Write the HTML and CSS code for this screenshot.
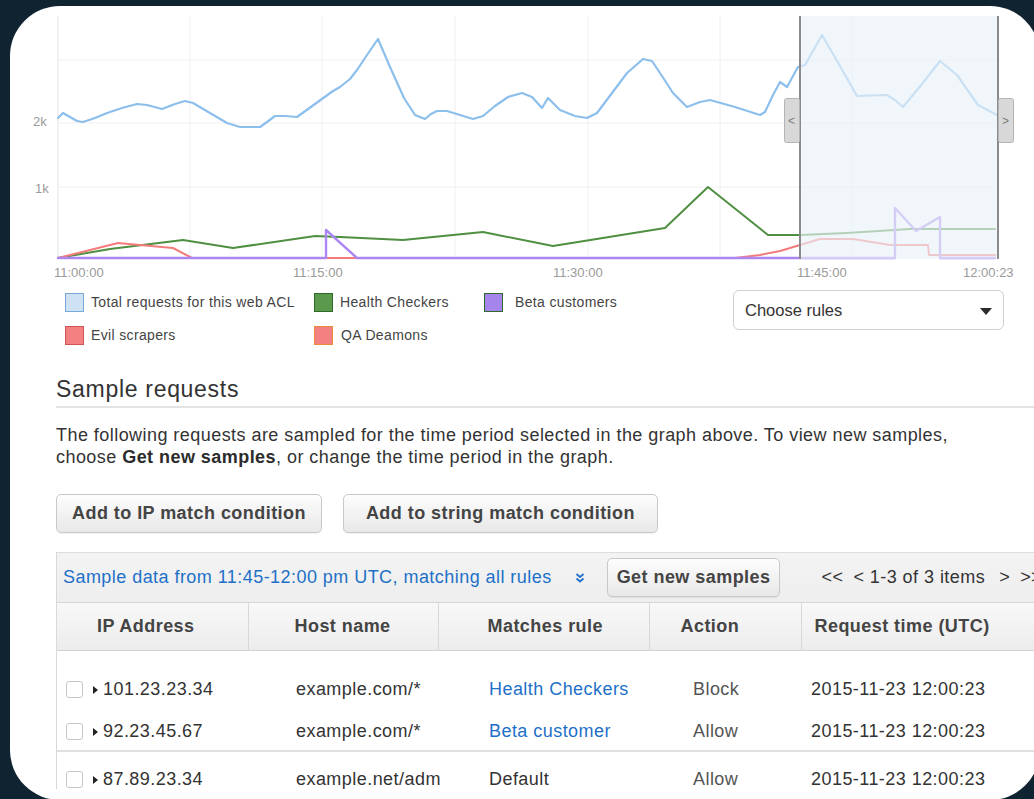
FILE: index.html
```html
<!DOCTYPE html>
<html lang="en">
<head>
<meta charset="utf-8">
<title>Web ACL – Sample requests</title>
<link rel="stylesheet" href="styles.css">
</head>
<body>
<div class="card">
  <svg class="chart" width="1030" height="280" viewBox="10 6 1030 280" xmlns="http://www.w3.org/2000/svg">
    <!-- grid -->
    <g class="grid-h">
      <line x1="58" y1="60" x2="998" y2="60"/>
      <line x1="58" y1="123" x2="998" y2="123"/>
      <line x1="58" y1="187" x2="998" y2="187"/>
    </g>
    <g class="grid-v">
      <line x1="190" y1="16" x2="190" y2="258"/>
      <line x1="322" y1="16" x2="322" y2="258"/>
      <line x1="455" y1="16" x2="455" y2="258"/>
      <line x1="588" y1="16" x2="588" y2="258"/>
      <line x1="720" y1="16" x2="720" y2="258"/>
      <line x1="852" y1="16" x2="852" y2="258"/>
    </g>
    <line class="axis" x1="58" y1="16" x2="58" y2="259"/>

    <text class="tick" x="33" y="126">2k</text>
    <text class="tick" x="35" y="193">1k</text>

    <!-- series -->
    <polyline class="s-total" points="58,118 63,113 70,117 77,121 83,122 95,118 107,113 122,108 137,104 147,105 162,109 175,104 185,101 193,103 210,113 227,123 240,127 260,127 267,122 275,116 285,116 297,117 315,104 333,91 340,87 350,79 357,70 367,55 378,39 390,67 404,98 415,115 425,119 431,114 437,111 447,111 460,115 473,119 483,116 495,106 508,97 522,93 532,97 542,108 548,98 560,110 575,116 587,118 597,113 612,93 627,73 643,59 652,61 662,76 673,93 687,107 700,102 710,100 735,107 760,115 765,112 773,95 780,82 787,87 793,76 798,67 805,65 822,35 840,66 857,96 887,95 895,100 903,107 922,84 940,61 957,75 978,105 997,115"/>
    <polyline class="s-health" points="58,258 110,249 183,240 233,248 315,236 340,237 403,240 483,232 553,246 665,228 708,187 768,235 800,235 847,233 910,229 995,229"/>
    <polyline class="s-evil" points="58,258 118,243 173,248 192,258 735,258 760,255 780,251 800,245 820,239 853,239 890,245 928,245 929,255 995,255"/>
    <polyline class="s-beta" points="58,258 326,258 326,230 357,258 895,258 895,208 916,231 940,217 940,258 995,258"/>

    <!-- selected time range -->
    <rect class="range" x="800" y="16" width="198" height="243"/>
    <line class="range-edge" x1="800" y1="16" x2="800" y2="259"/>
    <line class="range-edge" x1="998" y1="16" x2="998" y2="259"/>
    <rect class="handle" x="784.5" y="98.5" width="15" height="44" rx="2"/>
    <text class="handle-glyph" x="788" y="125">&lt;</text>
    <rect class="handle" x="998.5" y="98.5" width="15" height="44" rx="2"/>
    <text class="handle-glyph" x="1002" y="125">&gt;</text>

    <text class="tick" x="54" y="277">11:00:00</text>
    <text class="tick" x="293" y="277">11:15:00</text>
    <text class="tick" x="553" y="277">11:30:00</text>
    <text class="tick" x="797" y="277">11:45:00</text>
    <text class="tick" x="963" y="277">12:00:23</text>
  </svg>

  <div class="controls">
    <ul class="legend">
      <li><span class="swatch sw-total"></span>Total requests for this web ACL</li>
      <li><span class="swatch sw-health"></span>Health Checkers</li>
      <li class="wide-gap"><span class="swatch sw-beta"></span>Beta customers</li>
      <li><span class="swatch sw-evil"></span>Evil scrapers</li>
      <li class="narrow-gap"><span class="swatch sw-qa"></span>QA Deamons</li>
    </ul>
    <div class="select">Choose rules<span class="caret"></span></div>
  </div>

  <section class="samples">
    <h2>Sample requests</h2>
    <p>The following requests are sampled for the time period selected in the graph above. To view new samples, choose <b>Get new samples</b>, or change the time period in the graph.</p>

    <div class="actions">
      <button class="btn">Add to IP match condition</button>
      <button class="btn btn-wide">Add to string match condition</button>
    </div>

    <div class="grid">
      <div class="toolbar">
        <span class="range-text">Sample data from 11:45-12:00 pm UTC, matching all rules</span>
        <svg class="chev" width="10" height="10" viewBox="0 0 10 10"><polyline points="1.5,1 5,4 8.5,1"/><polyline points="1.5,5.5 5,8.5 8.5,5.5"/></svg>
        <button class="btn btn-small">Get new samples</button>
        <span class="pager"><span>&lt;&lt;</span><span>&lt; 1-3 of 3 items</span><span class="next">&gt;</span><span>&gt;&gt;</span></span>
      </div>
      <table>
        <colgroup><col class="c1"><col class="c2"><col class="c3"><col class="c4"><col class="c5"></colgroup>
        <thead>
          <tr><th class="h1">IP Address</th><th class="h2">Host name</th><th class="h3">Matches rule</th><th class="h4">Action</th><th class="h5">Request time (UTC)</th></tr>
        </thead>
        <tbody>
          <tr class="first">
            <td class="ip"><span class="check"></span><span class="tri"></span>101.23.23.34</td>
            <td class="host">example.com/*</td>
            <td class="rule"><a>Health Checkers</a></td>
            <td class="act">Block</td>
            <td class="time">2015-11-23 12:00:23</td>
          </tr>
          <tr class="second">
            <td class="ip"><span class="check"></span><span class="tri"></span>92.23.45.67</td>
            <td class="host">example.com/*</td>
            <td class="rule"><a>Beta customer</a></td>
            <td class="act">Allow</td>
            <td class="time">2015-11-23 12:00:23</td>
          </tr>
          <tr class="third">
            <td class="ip"><span class="check"></span><span class="tri"></span>87.89.23.34</td>
            <td class="host">example.net/adm</td>
            <td class="rule">Default</td>
            <td class="act">Allow</td>
            <td class="time">2015-11-23 12:00:23</td>
          </tr>
        </tbody>
      </table>
    </div>
  </section>
</div>
</body>
</html>
```

FILE: styles.css
```css
* { box-sizing: border-box; }

html, body {
  margin: 0;
  height: 100%;
}

body {
  background: #0f2330;
  overflow: hidden;
  font-family: "Liberation Sans", Arial, Helvetica, sans-serif;
  color: #333;
}

.card {
  margin: 6px 0 0 10px;
  width: 1030px;
  height: 794px;
  background: #fff;
  border-radius: 50px;
  overflow: hidden;
}

/* ---------- chart ---------- */
.chart { display: block; }

.grid-h line, .grid-v line { stroke: #f0f0f0; stroke-width: 1; }
.axis { stroke: #e4e4e4; stroke-width: 1; }

.tick {
  font-family: "Liberation Sans", Arial, sans-serif;
  font-size: 13px;
  fill: #9a9a9a;
}

.chart polyline { fill: none; stroke-linejoin: round; stroke-linecap: round; }
.s-total { stroke: #8cbfec; stroke-width: 2.2; }
.s-health { stroke: #4f8f41; stroke-width: 2; }
.s-evil { stroke: #f47b7b; stroke-width: 2; }
.s-beta { stroke: #ab86f2; stroke-width: 2.4; }

.range { fill: #eaf1f8; opacity: 0.66; }
.range-edge { stroke: #8a8a8a; stroke-width: 2; }
.handle { fill: #d8d8d8; stroke: #b4b4b4; stroke-width: 1; }
.handle-glyph {
  font-family: "Liberation Sans", Arial, sans-serif;
  font-size: 12px;
  fill: #7a7a7a;
}

/* ---------- legend + rule picker ---------- */
.controls {
  display: grid;
  grid-template-columns: 668px 271px;
  margin: 4px 0 0 55px;
}

.legend {
  list-style: none;
  margin: 0;
  padding: 3px 0 0;
  display: grid;
  grid-template-columns: 249px 170px auto;
  grid-auto-rows: 19px;
  row-gap: 14px;
  align-content: start;
}

.legend li {
  display: flex;
  align-items: center;
  gap: 7px;
  font-size: 14px;
  letter-spacing: 0.35px;
  line-height: 19px;
  color: #444;
  white-space: nowrap;
}
.legend li.wide-gap { gap: 12px; }
.legend li.narrow-gap { gap: 8px; }

.swatch {
  width: 19px;
  height: 19px;
  flex: none;
  border: 1.5px solid;
}
.sw-total { background: #cfe2f4; border-color: #78a8d6; }
.sw-health { background: #5b9a4c; border-color: #2f6a2b; }
.sw-beta { background: #a584ec; border-color: #2f6a2b; }
.sw-evil { background: #f38181; border-color: #cf5656; }
.sw-qa { background: #f38181; border-color: #ea8b3c; }

.select {
  height: 40px;
  border: 1px solid #cfcfcf;
  border-radius: 6px;
  padding: 0 11px 0 11px;
  display: flex;
  align-items: center;
  justify-content: space-between;
  font-size: 16.5px;
  color: #333;
}

.caret {
  width: 0;
  height: 0;
  border-left: 6.5px solid transparent;
  border-right: 6.5px solid transparent;
  border-top: 7px solid #2b2b2b;
  margin-top: 2px;
}

/* ---------- sample requests ---------- */
.samples { padding-left: 46px; }

.samples h2 {
  margin: 31px 0 0;
  font-size: 23px;
  font-weight: normal;
  letter-spacing: 0.7px;
  line-height: 26px;
  padding-bottom: 4px;
  border-bottom: 2px solid #e3e3e3;
  color: #333;
}

.samples p {
  margin: 16px 0 0;
  max-width: 920px;
  font-size: 18px;
  letter-spacing: 0.45px;
  line-height: 22px;
  color: #333;
}
.samples p b { color: #2b2b2b; }

.actions {
  display: flex;
  gap: 21px;
  margin-top: 26px;
}

.btn {
  height: 39px;
  padding: 0 15px;
  border: 1px solid #c9c9c9;
  border-radius: 5px;
  background: linear-gradient(#fdfdfd, #e8e8e8);
  box-shadow: 0 1px 1px rgba(0, 0, 0, 0.06);
  font-family: inherit;
  font-size: 18px;
  font-weight: bold;
  letter-spacing: 0.45px;
  color: #444;
  white-space: nowrap;
}
.btn-wide { padding: 0 22px; }
.btn-small { padding: 0 9px; margin-left: 22px; }

/* ---------- table ---------- */
.grid {
  margin-top: 19px;
  width: 1010px;
  border-left: 1px solid #d9d9d9;
}

.toolbar {
  height: 51px;
  display: flex;
  align-items: center;
  padding-left: 6px;
  background: linear-gradient(#f3f3f3, #eeeeee);
  border-top: 1px solid #dcdcdc;
  border-bottom: 1px solid #d6d6d6;
  font-size: 18px;
  letter-spacing: 0.45px;
  white-space: nowrap;
}

.range-text { color: #1e70c8; }

.chev { margin-left: 23px; flex: none; }
.chev polyline { fill: none; stroke: #1e70c8; stroke-width: 1.8; }

.pager {
  display: flex;
  gap: 10px;
  margin-left: 41px;
  color: #333;
}
.pager .next { margin-left: 4px; }

table {
  width: 993px;
  border-collapse: collapse;
  table-layout: fixed;
}
col.c1 { width: 191px; }
col.c2 { width: 190px; }
col.c3 { width: 211px; }
col.c4 { width: 152px; }
col.c5 { width: 249px; }

th {
  height: 47px;
  padding: 0;
  text-align: left;
  font-size: 18px;
  font-weight: bold;
  letter-spacing: 0.45px;
  color: #444;
  background: linear-gradient(#f8f8f8, #ececec);
  border-bottom: 1px solid #d2d2d2;
  border-left: 1px solid #d8d8d8;
  white-space: nowrap;
}
th.h1 { padding-left: 40px; border-left: 0; }
th.h2 { padding-left: 46px; }
th.h3 { padding-left: 49px; }
th.h4 { padding-left: 31px; }
th.h5 { padding-left: 13px; }

td {
  padding: 0;
  font-size: 18px;
  letter-spacing: 0.45px;
  line-height: 20px;
  color: #333;
  white-space: nowrap;
}
tr.first td { padding-top: 28px; padding-bottom: 11px; }
tr.second td { padding-top: 11px; padding-bottom: 9px; border-bottom: 2px solid #e0e0e0; }
tr.third td { padding-top: 17px; }

td.ip { padding-left: 9px; }
td.host { padding-left: 48px; }
td.rule { padding-left: 51px; }
td.act { padding-left: 44px; color: #555; }
td.time { padding-left: 10px; }

td.rule a { color: #1e70c8; }

.check {
  display: inline-block;
  width: 17px;
  height: 17px;
  border: 1px solid #c6c6c6;
  border-radius: 3px;
  vertical-align: -3px;
  margin-right: 10px;
}

.tri {
  display: inline-block;
  width: 0;
  height: 0;
  border-left: 5px solid #222;
  border-top: 4.5px solid transparent;
  border-bottom: 4.5px solid transparent;
  margin-right: 5px;
  vertical-align: 1px;
}
```
